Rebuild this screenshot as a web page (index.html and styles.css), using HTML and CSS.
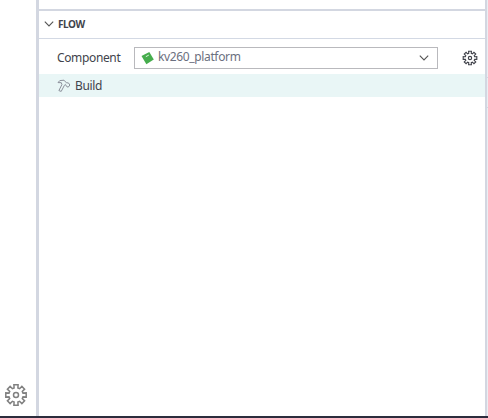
FILE: index.html
```html
<!DOCTYPE html>
<html lang="en">
<head>
<meta charset="utf-8">
<title>Flow</title>
<link rel="stylesheet" href="styles.css">
</head>
<body>
<svg class="defs" width="0" height="0">
  <symbol id="gear" viewBox="0 0 24 24">
    <path d="M10.1 5L9.9 1.8H14.1L13.9 5L15.6 5.7L17.87 3.4L20.6 6.13L18.3 8.4L19 10.1L22.2 9.9V14.1L19 13.9L18.3 15.6L20.6 17.87L17.87 20.6L15.6 18.3L13.9 19L14.1 22.2H9.9L10.1 19L8.4 18.3L6.13 20.6L3.4 17.87L5.7 15.6L5 13.9L1.8 14.1V9.9L5 10.1L5.7 8.4L3.4 6.13L6.13 3.4L8.4 5.7Z"/>
    <circle cx="12" cy="12" r="2.5"/>
  </symbol>
</svg>
<div class="app">
  <div class="main">
    <aside class="activity"><svg class="gear-large"><use href="#gear"/></svg></aside>
    <section class="panel">
      <div class="previous"></div>
      <header class="header">
        <svg class="chevron" viewBox="0 0 10 6"><path d="M.8.7L5 5L9.2.7"/></svg>
        <span class="title">FLOW</span>
      </header>
      <div class="component">
        <span class="label">Component</span>
        <div class="select">
          <svg class="chip" viewBox="0 0 14 14"><path d="M.5 5.1L8.3 1L12.8 8.6L5.4 13.2Z"/><path class="mark" d="M4.8 5.7L7.8 4.1"/></svg>
          <span class="value">kv260_platform</span>
          <svg class="chevron" viewBox="0 0 10 6"><path d="M.8.7L5 5L9.2.7"/></svg>
        </div>
        <svg class="gear-small"><use href="#gear"/></svg>
      </div>
      <div class="build">
        <svg class="hammer" viewBox="0 0 14 14"><path d="M1 3.6L2.8 1.6L7 1.2L9.4 3.8L11.4 3.9L12.9 6L11.2 8.2L9.5 7.4L8.4 5.4L7.4 6.3L4.2 12.4L1.9 11.6L4.9 5.6L4.3 3.7Z"/></svg>
        <span>Build</span>
      </div>
    </section>
    <div class="edge"><div class="tab"></div></div>
  </div>
  <footer class="status"></footer>
</div>
</body>
</html>
```
FILE: styles.css
```css
* { box-sizing: border-box; }
body { margin: 0; background: #fff; color: #41434b; font: 12px/20px "Noto Sans", sans-serif; letter-spacing: -.36px; }
svg { display: block; flex: none; fill: none; stroke: currentColor; }
.defs { position: absolute; }
.app { display: flex; flex-direction: column; height: 418px; overflow: hidden; }
.main { display: flex; flex: 1; }
.activity { width: 36px; display: flex; align-items: flex-end; padding: 0 0 9px 4px; color: #808080; }
.gear-large { width: 24px; height: 24px; stroke-width: 1.5; }
.panel { flex: 1; border-left: 3px solid #d3d7e1; }
.previous { height: 11px; border-bottom: 2px solid #d3d7e1; }
.header { display: flex; align-items: center; height: 28px; padding-left: 5px; border-bottom: 1px solid #d3d9e4; }
.title { font-size: 10px; line-height: 14px; font-weight: 700; margin-bottom: 2px; letter-spacing: -.4px; }
.header .chevron { margin: 0 4px 1px 0; }
.chevron { width: 10px; height: 6px; color: #555; stroke-width: 1.1; }
.component { display: flex; align-items: center; height: 35px; padding: 3px 0 0 18px; }
.label { width: 77px; }
.select { display: flex; align-items: center; width: 304px; height: 22px; padding: 0 8px 0 6px; border: 1px solid #b9b9bd; color: #6b7080; }
.chip { width: 14px; height: 14px; margin-right: 3px; fill: #46ad4d; stroke: none; }
.mark { stroke: #dff5df; stroke-width: 1; }
.value { flex: 1; margin-bottom: 2px; }
.gear-small { width: 16px; height: 16px; margin: 0 0 1px 24px; stroke-width: 1.7; }
.build { display: flex; align-items: center; height: 23px; padding-left: 18px; background: #e9f6f6; }
.hammer { width: 14px; height: 14px; margin-right: 4px; color: #8c909b; stroke-width: 1; stroke-linejoin: round; }
.edge { width: 3px; padding: 77px 0 0 2px; background: linear-gradient(90deg, #d3d7e1 2px, #eceef3 2px); }
.tab { height: 31px; border: solid #d3d7e1; border-width: 1px 0; }
.status { height: 2px; background: #2c2d3d; }
```
